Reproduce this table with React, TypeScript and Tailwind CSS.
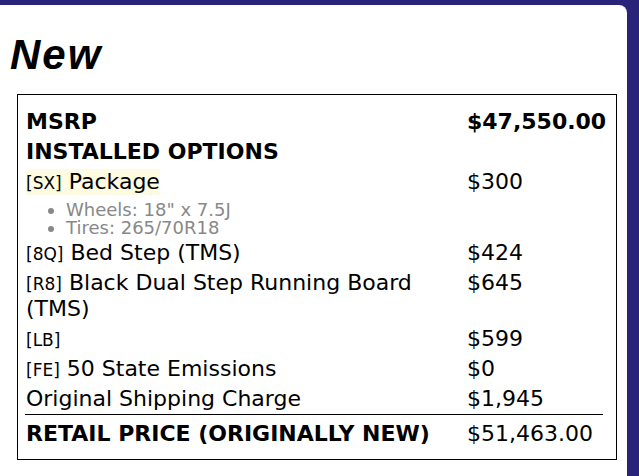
import React from "react";

type Row = {
  code?: string;
  label?: string;
  price: string;
  highlight?: boolean;
  details?: string[];
};

const options: Row[] = [
  { code: "SX", label: "Package", price: "$300", highlight: true, details: ['Wheels: 18" x 7.5J', "Tires: 265/70R18"] },
  { code: "8Q", label: "Bed Step (TMS)", price: "$424" },
  { code: "R8", label: "Black Dual Step Running Board (TMS)", price: "$645" },
  { code: "LB", price: "$599" },
  { code: "FE", label: "50 State Emissions", price: "$0" },
  { label: "Original Shipping Charge", price: "$1,945" },
];

export default function App() {
  return (
    <div className="h-[476px] overflow-hidden bg-[#2a237a] pt-[5px] pr-[12px]">
      <div className="h-full rounded-tr-[8px] bg-white text-black">
        <h1 className="pt-[28px] pl-[10px] font-['Liberation_Sans',Arial,sans-serif] text-[42px] font-bold italic leading-[44px] tracking-[2px]">
          New
        </h1>
        <div className="mt-[17px] ml-[17px] w-[600px] border border-black pt-[12px] pr-[13px] pb-[8px] pl-[7px] font-['DejaVu_Sans',sans-serif] text-[22px] leading-[26px]">
          <div className="grid grid-cols-[1fr_136px]">
            <div className="h-[30px] py-[2px] pl-[1px] font-bold">MSRP</div>
            <div className="py-[2px] font-bold">$47,550.00</div>
            <div className="col-span-2 h-[30px] py-[2px] pl-[1px] font-bold">INSTALLED OPTIONS</div>
            {options.map((o, i) => (
              <React.Fragment key={i}>
                <div className="py-[2px] pl-[1px]">
                  <div className={o.highlight ? "inline-block h-[26px] bg-[#fdfbe1]" : "min-h-[26px]"}>
                    {o.code && <span className="text-[17px] leading-none">[{o.code}]</span>}
                    {o.label && <> {o.label}</>}
                  </div>
                  {o.details && (
                    <ul className="mt-[6px] mb-[-1px] list-disc pl-[40px] text-[18px] leading-[18px] text-[#888]">
                      {o.details.map((d) => (
                        <li key={d}>{d}</li>
                      ))}
                    </ul>
                  )}
                </div>
                <div className="py-[2px]">{o.price}</div>
              </React.Fragment>
            ))}
            <div className="border-t border-black pt-[6px] pb-[4px] pl-[1px] font-bold">RETAIL PRICE (ORIGINALLY NEW)</div>
            <div className="border-t border-black pt-[6px] pb-[4px]">$51,463.00</div>
          </div>
        </div>
      </div>
    </div>
  );
}
